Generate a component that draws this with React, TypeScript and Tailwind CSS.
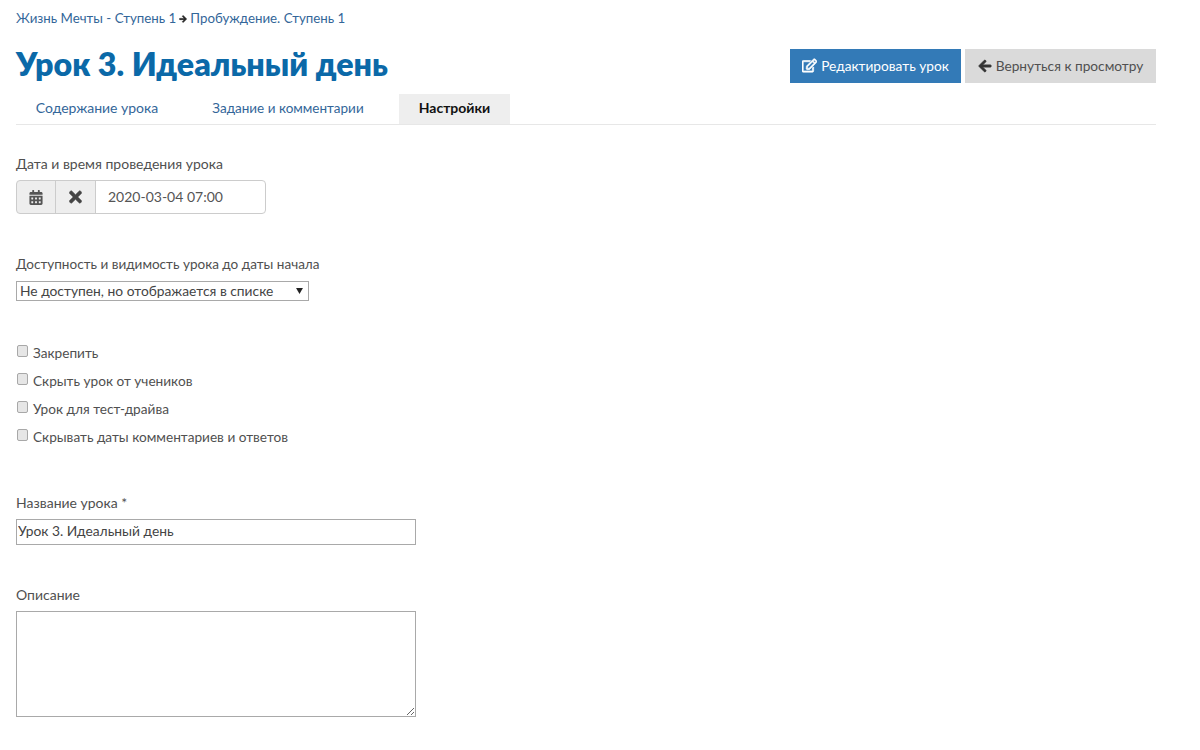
import { FaArrowLeft, FaCalendarAlt, FaRegEdit, FaTimes } from 'react-icons/fa';

const checks = ['Закрепить', 'Скрыть урок от учеников', 'Урок для тест-драйва', 'Скрывать даты комментариев и ответов'];

const App = () => {
    return (
        <div className="w-[1200px] h-[750px] overflow-hidden bg-white pl-4 pr-11 text-[14px] leading-[20px] text-[#505050] font-['Lato','Open_Sans',sans-serif]">
            <div className="pt-2 h-[49px] text-[13.3px] text-[#336699] flex items-start">
                <span>Жизнь Мечты - Ступень 1</span>
                <FaArrowLeft className="rotate-180 w-[8px] h-[8px] ml-[3px] mr-[3px] mt-[7px] text-[#222222] stroke-[40]" />
                <span>Пробуждение. Ступень 1</span>
            </div>

            <div className="flex items-center justify-between h-[34px]">
                <h1 className="text-[32.2px] leading-[34px] pb-[4px] font-extrabold text-[#0b69a8]">Урок 3. Идеальный день</h1>
                <div className="flex gap-1">
                    <button className="h-[34px] w-[171px] pb-[1px] flex items-center justify-center gap-1 bg-[#337ab7] text-white text-[13.7px]">
                        <FaRegEdit className="w-[15px] h-[15px] stroke-[24]" />
                        Редактировать урок
                    </button>
                    <button className="h-[34px] w-[191px] pb-[1px] flex items-center justify-center gap-1 bg-[#dadada] text-[#505050] text-[13.7px]">
                        <FaArrowLeft className="w-[14px] h-[14px] text-[#333333] stroke-[30]" />
                        Вернуться к просмотру
                    </button>
                </div>
            </div>

            <div className="mt-[11px] flex h-[31px] border-b border-[#e7e7e7]">
                <div className="w-[162px] h-[30px] pb-[2px] flex items-center justify-center text-[14px] text-[#336699]">Содержание урока</div>
                <div className="w-[192px] ml-[14px] h-[30px] pb-[2px] flex items-center justify-center text-[13.5px] text-[#336699]">Задание и комментарии</div>
                <div className="w-[111px] ml-[15px] h-[30px] pb-[2px] flex items-center justify-center bg-[#eeeeee] font-bold text-[#111111]">Настройки</div>
            </div>

            <div className="mt-[29px]">Дата и время проведения урока</div>
            <div className="mt-[6px] flex w-[250px] h-[34px]">
                <div className="w-[40px] pr-[1px] flex items-center justify-center bg-[#eeeeee] border border-[#cccccc] rounded-l-[4px] text-[#555555]">
                    <FaCalendarAlt className="w-[14px] h-[15px]" />
                </div>
                <div className="w-[41px] -ml-px flex items-center justify-center bg-[#eeeeee] border border-[#cccccc] text-[#444444]">
                    <FaTimes className="w-[13px] h-[18px] stroke-[15]" />
                </div>
                <input
                    readOnly
                    value="2020-03-04 07:00"
                    className="flex-1 min-w-0 -ml-px px-3 border border-[#cccccc] rounded-r-[4px] text-[14px] text-[#555555] outline-none"
                />
            </div>

            <div className="mt-[40px] text-[13.55px]">Доступность и видимость урока до даты начала</div>
            <div className="relative mt-[7px] w-[293px] h-[20px]">
                <select className="appearance-none block w-full h-full pl-[3px] pb-[1px] border border-[#a9a9a9] bg-white text-[13.8px] leading-[18px] text-[#444444] outline-none">
                    <option>Не доступен, но отображается в списке</option>
                </select>
                <svg viewBox="0 0 8 7" className="absolute right-[6px] top-[7px] w-[7px] h-[6px] fill-[#222222]">
                    <path d="M0 0h8L4 7z" />
                </svg>
            </div>

            <div className="mt-[38px] flex flex-col">
                {checks.map((c) => (
                    <label key={c} className="h-[28px] flex items-center text-[13.65px]">
                        <input
                            type="checkbox"
                            className="appearance-none ml-px mr-[5px] -mt-[4px] w-[11px] h-[12px] rounded-[2px] border border-[#a8a8a8] bg-[#e6e6e6]"
                        />
                        {c}
                    </label>
                ))}
            </div>

            <div className="mt-[42px]">Название урока *</div>
            <input
                readOnly
                value="Урок 3. Идеальный день"
                className="block mt-[6px] w-[400px] h-[26px] px-[1px] pb-[3px] border border-[#a9a9a9] text-[13.8px] text-[#444444] outline-none"
            />

            <div className="mt-[40px]">Описание</div>
            <textarea className="block mt-[6px] w-[400px] h-[106px] border border-[#a9a9a9] outline-none" />
        </div>
    );
};

export default App;
